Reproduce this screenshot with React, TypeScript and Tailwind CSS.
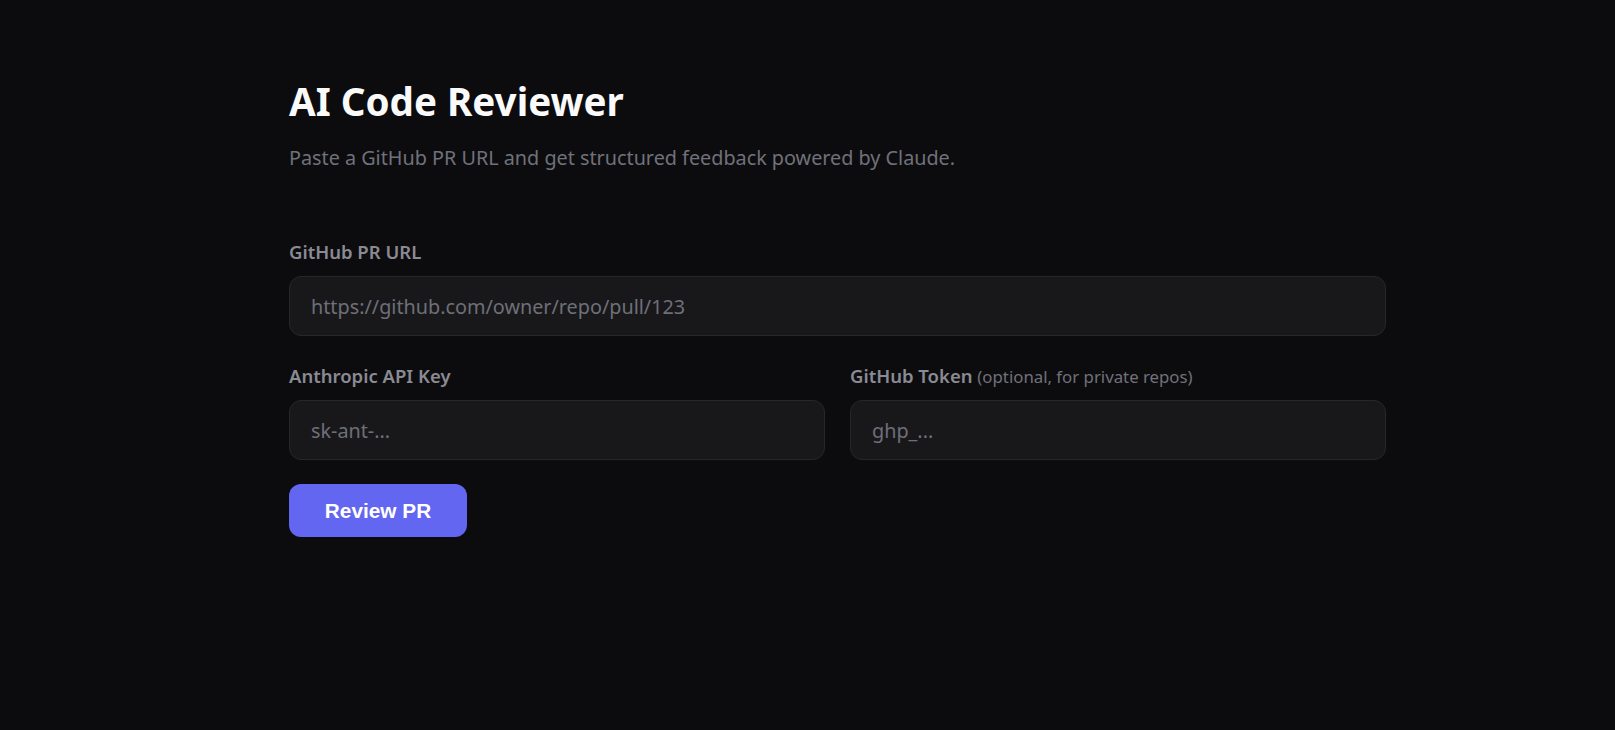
import { useState } from "react";

export default function App() {
  const [prUrl, setPrUrl] = useState("");
  const [apiKey, setApiKey] = useState("");
  const [ghToken, setGhToken] = useState("");

  return (
    <div className="min-h-screen bg-[#0c0c0f] font-['Noto_Sans',sans-serif]">
      <div className="ml-[289px] w-[1097px] pt-[77px]">
        {/* Header */}
        <h1 className="text-[38.6px] font-bold leading-[48px] text-[#fafafa]">AI Code Reviewer</h1>
        <p className="mt-[19px] text-[19.8px] leading-[28px] text-[#71717a]">
          Paste a GitHub PR URL and get structured feedback powered by Claude.
        </p>

        {/* PR URL */}
        <div className="mt-[68px] flex flex-col gap-[12px]">
          <label className="text-[18.5px] font-semibold leading-[24px] text-[#8a8a93]">GitHub PR URL</label>
          <input
            value={prUrl}
            onChange={(e) => setPrUrl(e.target.value)}
            placeholder="https://github.com/owner/repo/pull/123"
            className="h-[60px] rounded-[12px] border border-[#27272a] bg-[#18181b] px-[21px] text-[19.8px] text-[#e4e4e7] outline-none placeholder:text-[#6f6f78]"
          />
        </div>

        {/* Keys */}
        <div className="mt-[28px] grid grid-cols-2 gap-[25px]">
          <div className="flex flex-col gap-[12px]">
            <label className="text-[18.5px] font-semibold leading-[24px] text-[#8a8a93]">Anthropic API Key</label>
            <input
              type="password"
              value={apiKey}
              onChange={(e) => setApiKey(e.target.value)}
              placeholder="sk-ant-..."
              className="h-[60px] rounded-[12px] border border-[#27272a] bg-[#18181b] px-[21px] text-[19.8px] text-[#e4e4e7] outline-none placeholder:text-[#6f6f78]"
            />
          </div>
          <div className="flex flex-col gap-[12px]">
            <label className="text-[18.5px] font-semibold leading-[24px] text-[#8a8a93]">
              GitHub Token{" "}
              <span className="text-[16.8px] font-normal leading-none text-[#71717a]">(optional, for private repos)</span>
            </label>
            <input
              type="password"
              value={ghToken}
              onChange={(e) => setGhToken(e.target.value)}
              placeholder="ghp_..."
              className="h-[60px] rounded-[12px] border border-[#27272a] bg-[#18181b] px-[21px] text-[19.8px] text-[#e4e4e7] outline-none placeholder:text-[#6f6f78]"
            />
          </div>
        </div>

        <button className="mt-[24px] h-[53px] w-[178px] rounded-[12px] bg-[#6366f1] font-['Liberation_Sans',Arial,sans-serif] text-[20.8px] font-bold text-white">
          Review PR
        </button>
      </div>
    </div>
  );
}
